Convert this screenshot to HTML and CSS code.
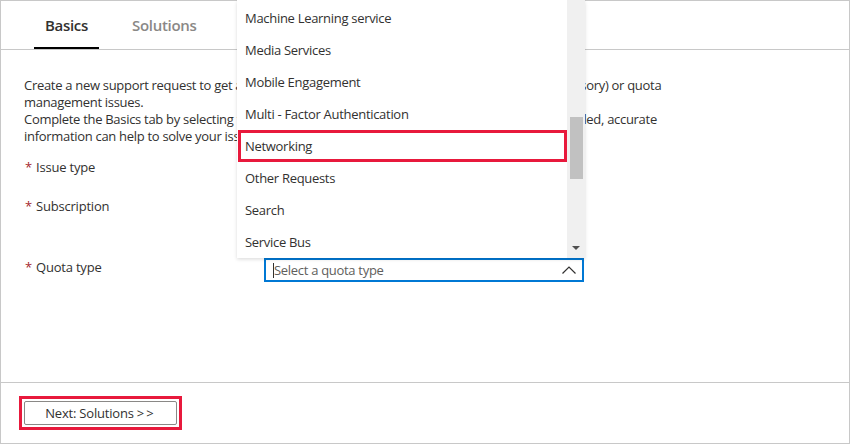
FILE: index.html
```html
<!DOCTYPE html>
<html lang="en">
<head>
<meta charset="utf-8">
<title>New support request</title>
<link rel="stylesheet" href="styles.css">
</head>
<body>
<div class="panel">
  <div class="tabs">
    <div class="tab active">Basics</div>
    <div class="tab">Solutions</div>
  </div>
  <div class="main">
    <p class="desc">Create a new support request to get assistance with billing, subscription, technical (including advisory) or quota<br>management issues.<br>Complete the Basics tab by selecting the options that best describe your problem. Providing detailed, accurate<br>information can help to solve your issue faster.</p>
    <div class="row row-issue">
      <div class="label"><span class="req">*</span>Issue type</div>
      <div class="control"></div>
    </div>
    <div class="row row-sub">
      <div class="label"><span class="req">*</span>Subscription</div>
      <div class="control"></div>
    </div>
    <div class="row row-quota">
      <div class="label"><span class="req">*</span>Quota type</div>
      <div class="control">
        <div class="combo">
          <span class="caret"></span><span class="placeholder">Select a quota type</span>
          <svg class="chev" width="14" height="8" viewBox="0 0 14 8"><polyline points="0.5,7.5 7,1 13.5,7.5" fill="none" stroke="#323130" stroke-width="1.2"/></svg>
        </div>
        <div class="listbox">
          <ul class="options">
            <li>Machine Learning service</li>
            <li>Media Services</li>
            <li>Mobile Engagement</li>
            <li>Multi - Factor Authentication</li>
            <li class="marked">Networking</li>
            <li>Other Requests</li>
            <li>Search</li>
            <li>Service Bus</li>
          </ul>
          <div class="scrollbar">
            <div class="thumb"></div>
            <div class="spacer"></div>
            <div class="arrow"></div>
          </div>
        </div>
      </div>
    </div>
  </div>
  <div class="footer">
    <div class="annot">
      <button class="btn">Next: Solutions <span class="gt">&gt;&gt;</span></button>
    </div>
  </div>
</div>
</body>
</html>
```

FILE: styles.css
```css
* { box-sizing: border-box; }
html, body { margin: 0; padding: 0; background: #fff; }
body {
  font-family: "Open Sans", "Noto Sans", sans-serif;
  font-size: 13px;
  color: #323130;
}
.panel {
  width: 850px;
  height: 444px;
  border: 1px solid #c8c8c8;
  display: flex;
  flex-direction: column;
}
.tabs {
  height: 49px;
  border-bottom: 1px solid #c8c8c8;
  display: flex;
  align-items: stretch;
  padding-left: 33px;
  gap: 22px;
}
.tab {
  padding: 1px 11px 0;
  font-size: 15px;
  font-weight: 600;
  color: #8a8886;
  display: flex;
  align-items: center;
  letter-spacing: -0.3px;
  border-bottom: 2px solid transparent;
}
.tab.active {
  color: #323130;
  border-bottom-color: #000;
}
.main {
  flex: 1;
  padding: 27px 23px 0;
}
.desc {
  margin: 0;
  line-height: 17px;
  white-space: nowrap;
  letter-spacing: -0.3px;
}
.row {
  display: flex;
  align-items: flex-start;
}
.row-issue { margin-top: 10px; height: 39px; }
.row-sub { height: 64px; }
.label {
  width: 240px;
  line-height: 24px;
  letter-spacing: -0.2px;
}
.row-quota .label { line-height: 18px; }
.req {
  color: #a4262c;
  display: inline-block;
  width: 12px;
  padding-left: 1px;
}
.control {
  position: relative;
  width: 320px;
}
.combo {
  height: 24px;
  border: 2px solid #0078d4;
  display: flex;
  align-items: center;
  padding: 0 6px 0 7px;
}
.caret {
  width: 1px;
  height: 15px;
  background: #323130;
}
.placeholder {
  flex: 1;
  color: #605e5c;
  letter-spacing: -0.3px;
}
.listbox {
  position: absolute;
  left: -27px;
  bottom: 24px;
  width: 348px;
  height: 258px;
  background: #fff;
  display: flex;
  box-shadow: 0 1.6px 3.6px rgba(0,0,0,0.14), 0 0.3px 0.9px rgba(0,0,0,0.12);
  overflow: hidden;
}
.options {
  list-style: none;
  margin: 2px 0 0;
  padding: 0;
  flex: 1;
}
.options li {
  height: 32px;
  line-height: 32px;
  padding-left: 8px;
  letter-spacing: -0.3px;
  white-space: nowrap;
}
.options li.marked {
  margin-left: 1px;
  border: 3px solid #e8193c;
  line-height: 26px;
  padding-left: 4px;
}
.scrollbar {
  width: 18px;
  background: #f0f0f0;
  display: flex;
  flex-direction: column;
  align-items: center;
  padding-top: 117px;
}
.thumb {
  width: 13px;
  height: 62px;
  background: #c1c1c1;
}
.spacer { flex: 1; }
.arrow {
  width: 0;
  height: 0;
  border-left: 4px solid transparent;
  border-right: 4px solid transparent;
  border-top: 4px solid #505050;
  margin-bottom: 8px;
}
.footer {
  height: 61px;
  border-top: 1px solid #c8c8c8;
  padding: 13px 0 0 18px;
}
.annot {
  display: inline-block;
  border: 3px solid #e8193c;
  padding: 2px;
}
.btn {
  display: block;
  width: 153px;
  height: 24px;
  border: 1px solid #8a8886;
  border-radius: 2px;
  background: #fff;
  font-family: inherit;
  font-size: 13px;
  color: #323130;
  letter-spacing: -0.2px;
  padding: 0;
}
.gt { letter-spacing: 2px; }
```
